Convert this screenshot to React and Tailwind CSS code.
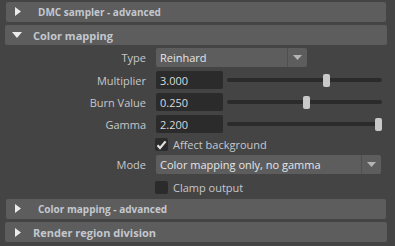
import React from 'react';

const font = { fontFamily: '"Open Sans", "Noto Sans", sans-serif' };

const RightTri = () => (
  <svg width="6" height="9" viewBox="0 0 6 9" className="shrink-0">
    <path d="M0 0 L6 4.5 L0 9 Z" fill="#ececec" />
  </svg>
);

const DownTri = () => (
  <svg width="10" height="6" viewBox="0 0 10 6" className="shrink-0">
    <path d="M0 0 L10 0 L5 6 Z" fill="#ececec" />
  </svg>
);

const SubHeader = ({ title }) => (
  <div className="ml-[6px] mr-[9px] h-[20px] flex items-center bg-[#5d5d5d] rounded-[2px]">
    <div className="ml-[9px] mt-[-1px]"><RightTri /></div>
    <span className="ml-[17px] text-[10px] font-bold text-[#c3c8cf] leading-none">{title}</span>
  </div>
);

const Header = ({ title, open }) => (
  <div className="ml-[5px] mr-[8px] h-[20px] flex items-center bg-[#5d5d5d] rounded-[2px]">
    {open ? (
      <div className="ml-[7px]"><DownTri /></div>
    ) : (
      <div className="ml-[10px]"><RightTri /></div>
    )}
    <span className={`${open ? 'ml-[11px]' : 'ml-[12px]'} text-[11px] font-bold text-[#c3c8cf] leading-none`}>{title}</span>
  </div>
);

const Label = ({ children }) => (
  <div className="w-[146px] text-right text-[11px] text-[#c4c8cc] leading-none shrink-0">{children}</div>
);

const Dropdown = ({ value, width }) => (
  <div className={`${width} h-[19px] flex items-center bg-[#5d5d5d] rounded-[2px]`}>
    <span className="flex-1 pl-[4px] text-[11px] text-[#e4e6e8] leading-none">{value}</span>
    <div className="w-px h-full bg-[#4f4f4f]" />
    <div className="w-[19px] h-full flex items-center justify-center">
      <svg width="9" height="5" viewBox="0 0 9 5">
        <path d="M0 0 L9 0 L4.5 5 Z" fill="#b4b4b4" />
      </svg>
    </div>
  </div>
);

const SliderRow = ({ label, value, pos }) => (
  <div className="flex items-center h-[18px]">
    <Label>{label}</Label>
    <div className="ml-[10px] w-[67px] h-[18px] flex items-center bg-[#2b2b2b] rounded-[2px]">
      <span className="pl-[4px] text-[11px] text-[#d8dadc] leading-none">{value}</span>
    </div>
    <div className="relative ml-[4px] w-[155px] h-[13px] flex items-center">
      <div className="w-full h-[4px] bg-[#2b2b2b] rounded-full" />
      <div className="absolute top-0 w-[7px] h-[13px] bg-[#c9c9c9] rounded-[2px]" style={{ left: pos }} />
    </div>
  </div>
);

const Check = ({ label, checked }) => (
  <div className="flex items-center h-[13px]">
    <div className="w-[146px] shrink-0" />
    <div className="ml-[9px] w-[13px] h-[13px] bg-[#2b2b2b] rounded-[2px] flex items-center justify-center">
      {checked && (
        <svg width="11" height="10" viewBox="0 0 11 10">
          <path d="M1.5 5.2 L4 8 L9.6 1.4" fill="none" stroke="#e2e2e2" strokeWidth="2.2" />
        </svg>
      )}
    </div>
    <span className="ml-[5px] text-[11px] text-[#c4c8cc] leading-none">{label}</span>
  </div>
);

export default function App() {
  return (
    <div className="w-[395px] h-[246px] bg-[#444444] pt-[2px] overflow-hidden" style={font}>
      <SubHeader title="DMC sampler - advanced" />
      <div className="mt-[3px]">
        <Header title="Color mapping" open />
      </div>

      <div className="flex flex-col">
        <div className="mt-[3px] flex items-center h-[19px]">
          <Label>Type</Label>
          <div className="ml-[10px]">
            <Dropdown value="Reinhard" width="w-[151px]" />
          </div>
        </div>
        <div className="mt-[4px]"><SliderRow label="Multiplier" value="3.000" pos={96} /></div>
        <div className="mt-[4px]"><SliderRow label="Burn Value" value="0.250" pos={76} /></div>
        <div className="mt-[4px]"><SliderRow label="Gamma" value="2.200" pos={148} /></div>
        <div className="mt-[5px]"><Check label="Affect background" checked /></div>
        <div className="mt-[4px] flex items-center h-[18px]">
          <Label>Mode</Label>
          <div className="ml-[10px]">
            <Dropdown value="Color mapping only, no gamma" width="w-[225px]" />
          </div>
        </div>
        <div className="mt-[8px]"><Check label="Clamp output" /></div>
      </div>

      <div className="mt-[5px]">
        <SubHeader title="Color mapping - advanced" />
      </div>
      <div className="mt-[3px]">
        <Header title="Render region division" />
      </div>
    </div>
  );
}
